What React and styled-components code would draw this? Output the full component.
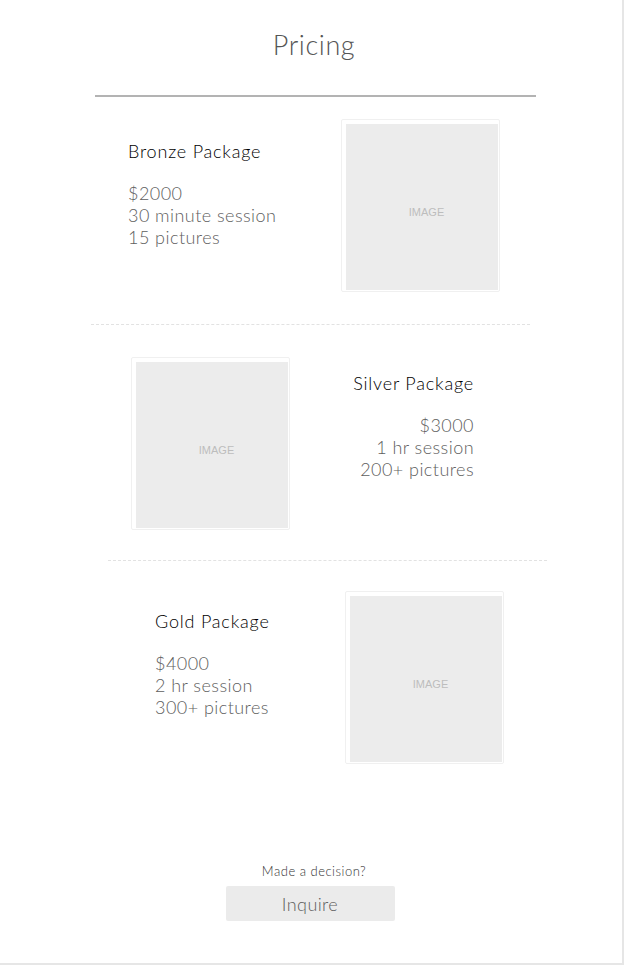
import styled, { createGlobalStyle } from "styled-components";

const GlobalStyle = createGlobalStyle`
  * { box-sizing: border-box; }
  body {
    margin: 0;
    background: #fff;
    font-family: Lato, "Open Sans", sans-serif;
  }
`;

const Frame = styled.div`
  width: 624px;
  height: 965px;
  border-right: 2px solid #e6e6e6;
  border-bottom: 2px solid #e6e6e6;
  display: flex;
  flex-direction: column;
`;

const Title = styled.h1`
  margin: 30px 0 0;
  padding-left: 6px;
  text-align: center;
  font-size: 27px;
  line-height: 30px;
  font-weight: 300;
  letter-spacing: 0.6px;
  color: #555;
`;

const Rule = styled.div`
  width: 441px;
  height: 2px;
  margin: 35px 0 0 95px;
  background: #b3b3b3;
`;

const Section = styled.section`
  width: 439px;
  margin-left: ${(p) => p.$shift}px;
  padding: ${(p) => p.$pad};
  display: flex;
  justify-content: space-between;
  align-items: flex-start;
  border-bottom: ${(p) => (p.$divider ? "1px dashed #e2e2e2" : "none")};
`;

const Info = styled.div`
  margin-top: ${(p) => p.$top}px;
  text-align: ${(p) => p.$align};
  letter-spacing: 0.45px;
`;

const Name = styled.div`
  font-size: 18px;
  line-height: 22px;
  font-weight: 300;
  letter-spacing: 0.8px;
  color: #000;
  margin-bottom: 20px;
`;

const Detail = styled.div`
  font-size: 18px;
  line-height: 22px;
  font-weight: 300;
  color: #5e5e5e;
`;

const Photo = styled.div`
  width: 159px;
  height: 173px;
  padding: 4px 1px 1px 4px;
  border: 1px solid #f0f0f0;
  border-radius: 2px;
  flex-shrink: 0;
`;

const PhotoFill = styled.div`
  width: 100%;
  height: 100%;
  padding: 10px 0 0 9px;
  background: #ececec;
  display: flex;
  align-items: center;
  justify-content: center;
  font-family: "Liberation Sans", Arial, sans-serif;
  font-size: 11px;
  color: #bdbdbd;
`;

const Footer = styled.div`
  margin-top: auto;
  padding-bottom: 42px;
  display: flex;
  flex-direction: column;
  align-items: center;
  gap: 7px;
`;

const Prompt = styled.div`
  font-size: 13px;
  line-height: 16px;
  font-weight: 300;
  letter-spacing: 0.5px;
  color: #333;
  padding-left: 6px;
`;

const Button = styled.button`
  width: 169px;
  height: 35px;
  margin-right: 2px;
  border: none;
  border-radius: 2px;
  background: #ebebeb;
  font-family: inherit;
  font-size: 18px;
  font-weight: 300;
  letter-spacing: 0.4px;
  color: #5e5e5e;
`;

const packages = [
  {
    name: "Bronze Package",
    lines: ["$2000", "30 minute session", "15 pictures"],
    shift: 91,
    pad: "22px 30px 32px 37px",
    top: 21,
    divider: true,
  },
  {
    name: "Silver Package",
    lines: ["$3000", "1 hr session", "200+ pictures"],
    shift: 108,
    pad: "32px 73px 30px 23px",
    top: 15,
    divider: true,
    imageFirst: true,
  },
  {
    name: "Gold Package",
    lines: ["$4000", "2 hr session", "300+ pictures"],
    shift: 108,
    pad: "30px 43px 0 47px",
    top: 19,
  },
];

function Image() {
  return (
    <Photo>
      <PhotoFill>IMAGE</PhotoFill>
    </Photo>
  );
}

export default function App() {
  return (
    <>
      <GlobalStyle />
      <Frame>
        <Title>Pricing</Title>
        <Rule />
        {packages.map((p) => (
          <Section key={p.name} $shift={p.shift} $pad={p.pad} $divider={p.divider}>
            {p.imageFirst && <Image />}
            <Info $top={p.top} $align={p.imageFirst ? "right" : "left"}>
              <Name>{p.name}</Name>
              {p.lines.map((l) => (
                <Detail key={l}>{l}</Detail>
              ))}
            </Info>
            {!p.imageFirst && <Image />}
          </Section>
        ))}
        <Footer>
          <Prompt>Made a decision?</Prompt>
          <Button>Inquire</Button>
        </Footer>
      </Frame>
    </>
  );
}
